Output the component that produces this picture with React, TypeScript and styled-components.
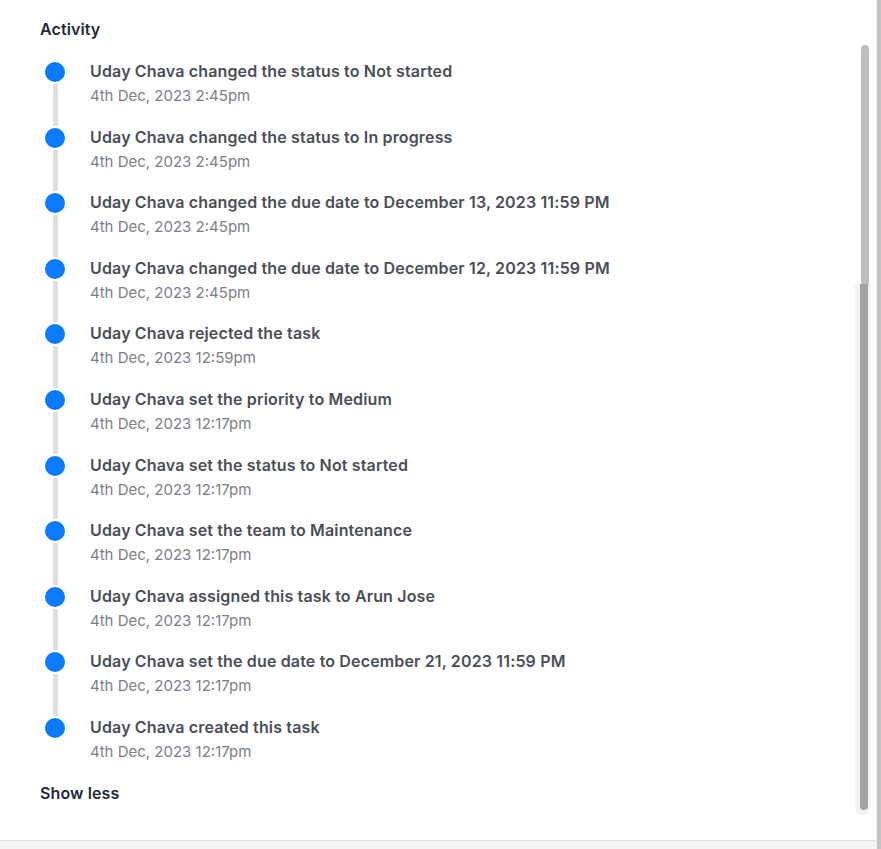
import styled, { createGlobalStyle } from 'styled-components';

const GlobalStyle = createGlobalStyle`
  html, body {
    margin: 0;
    padding: 0;
    background: #ffffff;
  }

  body {
    font-family: Inter, 'Noto Sans', 'Liberation Sans', sans-serif;
    -webkit-font-smoothing: antialiased;
  }
`;

interface IActivity {
  text: string;
  time: string;
}

const activities: IActivity[] = [
  { text: 'Uday Chava changed the status to Not started', time: '4th Dec, 2023 2:45pm' },
  { text: 'Uday Chava changed the status to In progress', time: '4th Dec, 2023 2:45pm' },
  { text: 'Uday Chava changed the due date to December 13, 2023 11:59 PM', time: '4th Dec, 2023 2:45pm' },
  { text: 'Uday Chava changed the due date to December 12, 2023 11:59 PM', time: '4th Dec, 2023 2:45pm' },
  { text: 'Uday Chava rejected the task', time: '4th Dec, 2023 12:59pm' },
  { text: 'Uday Chava set the priority to Medium', time: '4th Dec, 2023 12:17pm' },
  { text: 'Uday Chava set the status to Not started', time: '4th Dec, 2023 12:17pm' },
  { text: 'Uday Chava set the team to Maintenance', time: '4th Dec, 2023 12:17pm' },
  { text: 'Uday Chava assigned this task to Arun Jose', time: '4th Dec, 2023 12:17pm' },
  { text: 'Uday Chava set the due date to December 21, 2023 11:59 PM', time: '4th Dec, 2023 12:17pm' },
  { text: 'Uday Chava created this task', time: '4th Dec, 2023 12:17pm' },
];

const Page = styled.div`
  display: flex;
  width: 881px;
  height: 849px;
  overflow: hidden;
`;

const Main = styled.div`
  display: flex;
  flex-direction: column;
  width: 876px;
`;

const PageScrollbar = styled.div`
  width: 4px;
  border-left: 1px solid #f0f0f0;
  background: #c3c3c3;
`;

const Panel = styled.div`
  display: flex;
  height: 840px;
  background: #ffffff;
  border-bottom: 1px solid #e3e3e3;
`;

const Footer = styled.div`
  flex: 1;
  background: #f5f5f6;
`;

const Content = styled.div`
  flex: 1;
  padding: 18px 0 0 40px;
`;

const Heading = styled.h3`
  margin: 0 0 20px;
  font-size: 16px;
  line-height: 22px;
  font-weight: 600;
  letter-spacing: 0.1px;
  color: #1f2937;
`;

const Timeline = styled.ul`
  margin: 0;
  padding: 0;
  list-style: none;
`;

const Item = styled.li`
  display: flex;
  gap: 20px;
`;

const Marker = styled.div`
  display: flex;
  flex-direction: column;
  align-items: center;
  width: 30px;
`;

const Dot = styled.span`
  width: 20px;
  height: 20px;
  border-radius: 50%;
  background: #0a7aff;
  border: 2px solid #ffffff;
  flex-shrink: 0;
`;

const Connector = styled.span<{ $hidden?: boolean }>`
  flex: 1;
  width: 5px;
  margin-left: 1px;
  background: ${({ $hidden }) => ($hidden ? 'transparent' : '#dfe0e6')};
`;

const Body = styled.div`
  padding-bottom: 18.6px;
`;

const Title = styled.div`
  font-size: 16px;
  line-height: 22px;
  font-weight: 600;
  letter-spacing: 0.15px;
  color: #4a4f57;
`;

const Time = styled.div`
  margin-top: 3px;
  font-size: 15px;
  line-height: 22px;
  color: #7b7f87;
`;

const ShowLess = styled.button`
  margin: 0;
  padding: 0;
  border: none;
  background: none;
  font-family: inherit;
  font-size: 16px;
  line-height: 22px;
  font-weight: 600;
  letter-spacing: 0.1px;
  color: #1f2937;
  cursor: pointer;
`;

const Rail = styled.div`
  display: flex;
  flex-direction: column;
  align-items: flex-start;
  width: 21px;
  padding-top: 45px;
`;

const LightThumb = styled.div`
  width: 8px;
  height: 239px;
  margin-left: 6px;
  border-radius: 4px 4px 0 0;
  background: #bdbdc2;
`;

const Track = styled.div`
  width: 16px;
  height: 531px;
  box-sizing: border-box;
  padding: 0 3px 5px 5px;
  border-radius: 0 0 8px 8px;
  background: #f3f3f4;
`;

const DarkThumb = styled.div`
  height: 100%;
  border-radius: 0 0 5px 5px;
  background: #a1a1a6;
`;

const App = () => {
  return (
    <>
      <GlobalStyle />
      <Page>
        <Main>
          <Panel>
            <Content>
              <Heading>Activity</Heading>
              <Timeline>
                {activities.map((activity, idx) => (
                  <Item key={idx}>
                    <Marker>
                      <Dot />
                      <Connector $hidden={idx === activities.length - 1} />
                    </Marker>
                    <Body>
                      <Title>{activity.text}</Title>
                      <Time>{activity.time}</Time>
                    </Body>
                  </Item>
                ))}
              </Timeline>
              <ShowLess>Show less</ShowLess>
            </Content>
            <Rail>
              <LightThumb />
              <Track>
                <DarkThumb />
              </Track>
            </Rail>
          </Panel>
          <Footer />
        </Main>
        <PageScrollbar />
      </Page>
    </>
  );
};

export default App;
